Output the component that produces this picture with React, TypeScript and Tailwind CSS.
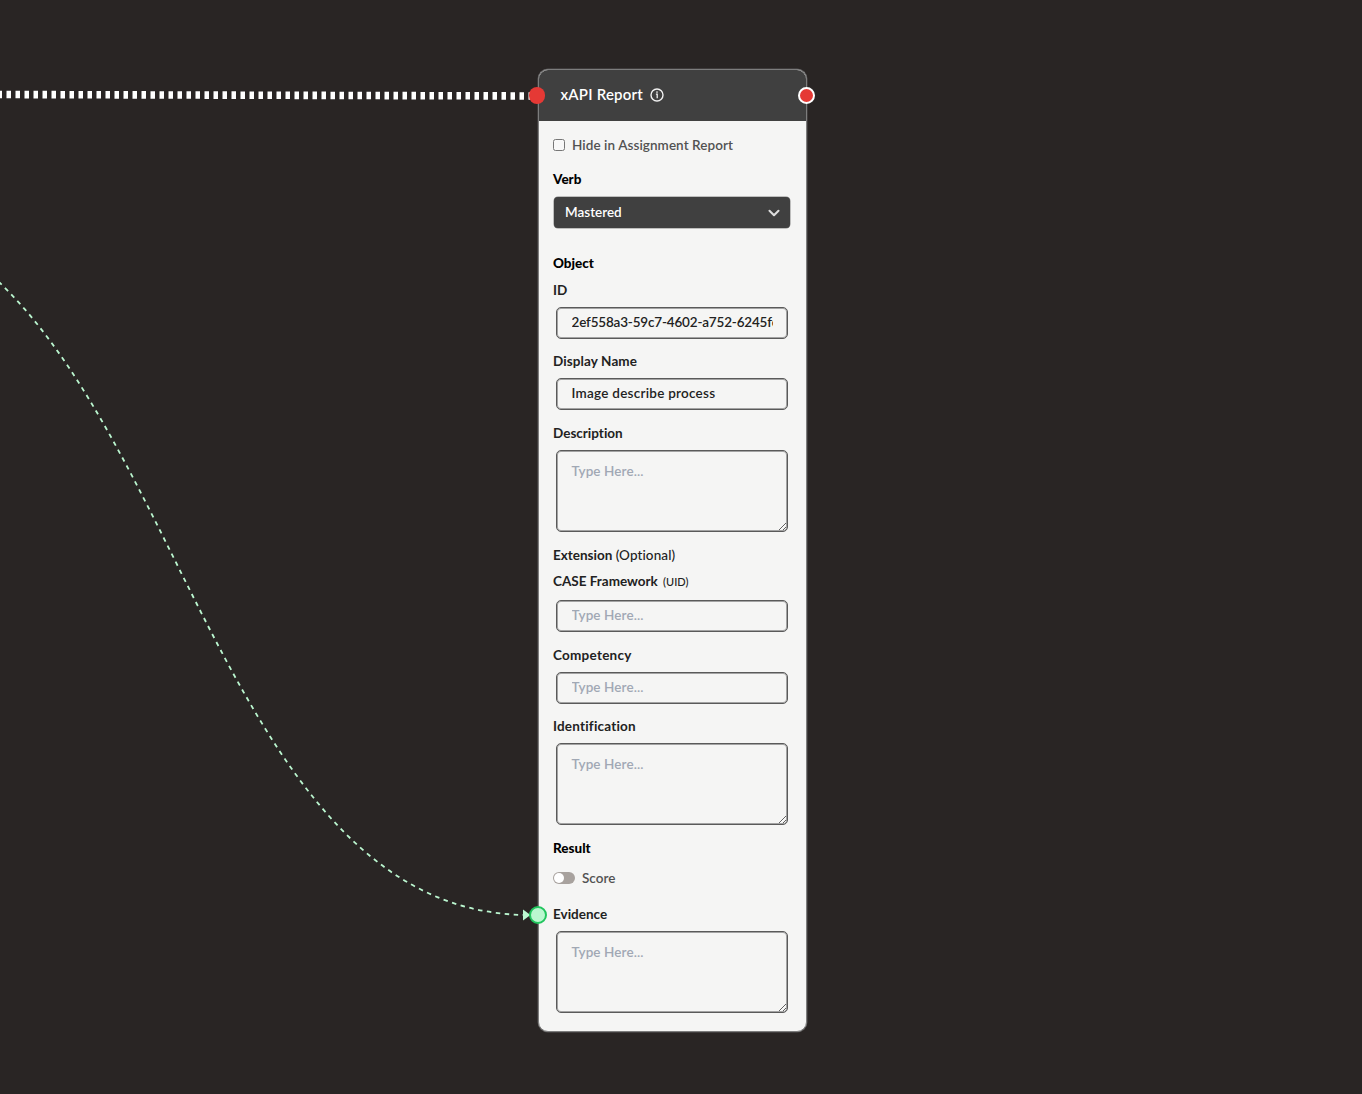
import React from "react";
import {ChevronDown} from "lucide-react";

interface FieldProps {
    label: React.ReactNode;
    value?: string;
    multiline?: boolean;
    className?: string;
    inputClass?: string;
}

const fieldBox = "block ml-[3px] w-[232px] rounded-[5px] border border-[#5a5a5a] shadow-[inset_0_0_0_1px_#52525280] bg-transparent px-[14.5px] text-[13.5px] font-semibold text-[#222] placeholder:text-[#a1a8b4] outline-none";

const Field: React.FC<FieldProps> = ({label, value, multiline, className = "", inputClass = "mt-[7px] tracking-[0.1px]"}) => {
    return (
        <div className={className}>
            <p className="h-5 leading-5 whitespace-nowrap text-[13.5px] font-bold text-[#222]">{label}</p>
            {multiline ? (
                <textarea className={`${fieldBox} h-[82px] pt-[10px] leading-[21px] resize ${inputClass}`}
                          placeholder="Type Here..." defaultValue={value}/>
            ) : (
                <input className={`${fieldBox} h-8 pb-[3px] ${inputClass}`}
                       placeholder="Type Here..." defaultValue={value}/>
            )}
        </div>
    )
}

const InfoIcon: React.FC = () => {
    return (
        <svg width="14" height="14" viewBox="0 0 14 14" fill="none" stroke="#f0f0f0">
            <circle cx="7" cy="7" r="6" strokeWidth="1.4"/>
            <path d="M5.9 6.2H7.2V10.3" strokeWidth="1.3"/>
            <circle cx="7" cy="4" r="0.85" fill="#f0f0f0" stroke="none"/>
        </svg>
    )
}

const Edges: React.FC = () => {
    return (
        <svg className="absolute inset-0" width="1362" height="1094" fill="none">
            <path d="M-2.5 94.5L537 96" stroke="#fff" strokeWidth="7.6" strokeDasharray="4.5 4.5"/>
            <path d="M-179 206C175 206 175 915 529 915" stroke="#bbf7d0" strokeWidth="1.8" strokeDasharray="4.5 4.5"/>
            <path d="M523 909.5L530.5 915L523 920.5Z" fill="#bbf7d0"/>
        </svg>
    )
}

const App: React.FC = () => {
    return (
        <div className="relative h-[1094px] w-[1362px] overflow-hidden bg-[#292524] font-['Lato',sans-serif] [font-variant-ligatures:none]">
            <Edges/>
            <div className="relative ml-[538px] pt-[69px]">
                <div className="h-[963px] w-[269px] overflow-hidden rounded-[10px] border border-[#7d7d7d] bg-[#f5f5f4] shadow-[0_0_0_0.5px_#77777799]">
                    <div className="flex h-[51px] items-center gap-[7px] bg-[#404040] pl-[21.5px] pb-[2px] text-white">
                        <p className="text-[15px] font-semibold tracking-[0.2px]">xAPI Report</p>
                        <InfoIcon/>
                    </div>
                    <div className="px-[14px] pt-[14px]">
                        <div className="flex h-5 items-center gap-[7px]">
                            <span className="h-3 w-3 rounded-[2.5px] border border-[#767676] bg-[#f8f8f8]"/>
                            <p className="whitespace-nowrap text-[13.5px] font-semibold tracking-[0.07px] text-[#525252]">Hide in Assignment Report</p>
                        </div>
                        <p className="mt-[14px] h-5 text-[13.5px] leading-5 font-black text-black">Verb</p>
                        <div className="mt-[8px] ml-px flex h-[31px] w-[236px] items-center justify-between rounded-[4px] bg-[#404040] pr-[7px] pl-[11px] text-white shadow-[0_0_0_0.5px_#40404099]">
                            <p className="text-[13.5px] font-semibold">Mastered</p>
                            <ChevronDown size={18} strokeWidth={2.8} color="#dcdcdc"/>
                        </div>
                        <p className="mt-[25px] h-5 text-[13.5px] leading-5 font-black text-black">Object</p>
                        <Field className="mt-[7px]" label="ID" value="2ef558a3-59c7-4602-a752-6245fc0d1e7b"
                               inputClass="mt-[7px] tracking-[-0.18px]"/>
                        <Field className="mt-[12px]" label={<span className="tracking-[0.1px]">Display Name</span>}
                               value="Image describe process" inputClass="mt-[7px] tracking-[0.25px]"/>
                        <Field className="mt-[13px]" label="Description" multiline/>
                        <p className="mt-[13px] h-5 text-[13.5px] leading-5 font-bold text-[#222]">Extension <span className="font-medium tracking-[0.1px]">(Optional)</span></p>
                        <Field className="mt-[6px]" inputClass="mt-[9px] tracking-[0.1px]"
                               label={<>CASE Framework <span className="ml-0.5 text-[11px] font-medium">(UID)</span></>}/>
                        <Field className="mt-[13px]" label={<span className="tracking-[0.25px]">Competency</span>}/>
                        <Field className="mt-[12px]" label={<span className="tracking-[0.2px]">Identification</span>} multiline/>
                        <p className="mt-[13px] h-5 text-[13.5px] leading-5 font-black text-black">Result</p>
                        <div className="mt-[10px] flex h-5 items-center gap-[7px]">
                            <span className="flex h-3 w-[22px] items-center rounded-full bg-[#a8a29e] p-px">
                                <span className="h-[10px] w-[10px] rounded-full bg-white"/>
                            </span>
                            <p className="text-[13.5px] font-semibold text-[#525252]">Score</p>
                        </div>
                        <Field className="mt-[16px]" label="Evidence" multiline/>
                    </div>
                </div>
                <span className="absolute top-[87px] left-[-9px] h-[17px] w-4 rounded-full bg-[#e53935]"/>
                <span className="absolute top-[87px] left-[260px] h-[17px] w-[17px] rounded-full border-2 border-white bg-[#e53935]"/>
                <span className="absolute top-[906px] left-[-9px] h-[18px] w-[18px] rounded-full border-2 border-[#22c55e] bg-[#bbf7d0]"/>
            </div>
        </div>
    )
}

export default App
